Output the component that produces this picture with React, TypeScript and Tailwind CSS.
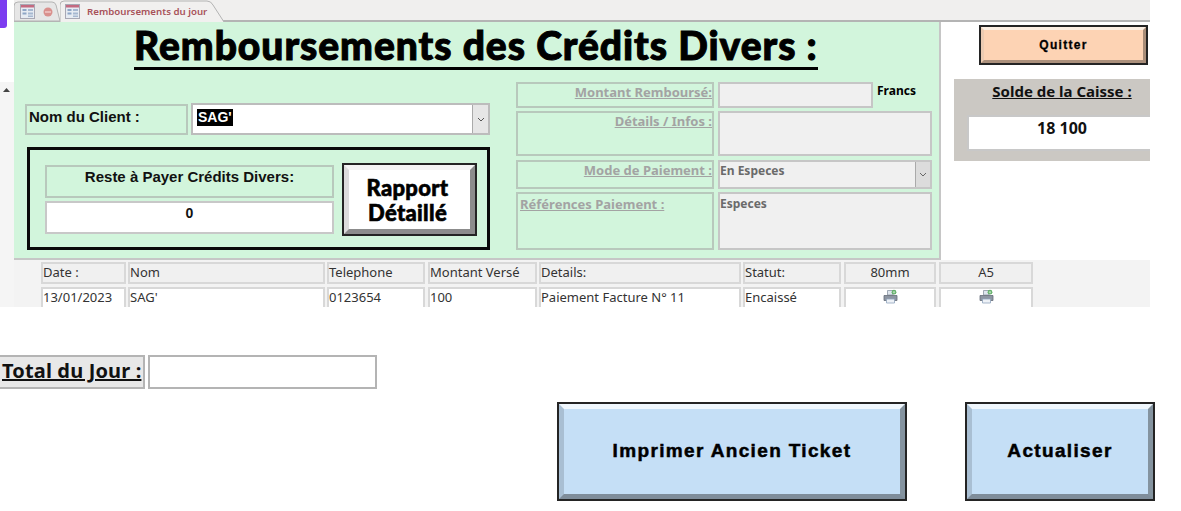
import React from 'react';

const arial = "font-['Liberation_Sans',Arial,sans-serif]";
const tahoma = "font-['Noto_Sans',sans-serif]";
const heavy = "font-['Lato',sans-serif]";

const FormIcon = () => (
    <svg width="15" height="15" viewBox="0 0 15 15">
        <rect x="0.5" y="0.5" width="14" height="14" fill="#e6ebf2" stroke="#a8a8b4" />
        <rect x="1" y="1" width="13" height="2.5" fill="#c46a80" />
        <rect x="2.5" y="5" width="4" height="2" fill="#8ea6c6" />
        <rect x="8" y="5" width="5" height="2" fill="#a6b8d0" />
        <rect x="2.5" y="8.5" width="4" height="2" fill="#8ea6c6" />
        <rect x="8" y="8.5" width="5" height="2" fill="#a6b8d0" />
        <rect x="8" y="11.5" width="5" height="1.5" fill="#a6b8d0" />
    </svg>
);

const PrinterIcon = () => (
    <svg width="15" height="15" viewBox="0 0 15 15">
        <path d="M4.5 1.5h5.5v4.5H4.5z" fill="#dfe6ee" stroke="#8b95a3" strokeWidth="0.8" />
        <path d="M1 6.5h13v5H1z" fill="#8d95a2" stroke="#666d78" strokeWidth="0.8" />
        <path d="M3.5 10h8v4h-8z" fill="#eef2f7" stroke="#8fa3bc" strokeWidth="0.8" />
        <circle cx="11" cy="3.2" r="2.4" fill="#63b06a" />
        <path d="M9.8 3.2h2.4M11 2v2.4" stroke="#e5f5e5" strokeWidth="0.6" />
    </svg>
);

const Tabs = () => (
    <div className="flex h-[22px] bg-[#f0efee] border-b-2 border-[#b4b4b4]">
        <div className="relative w-[46px] h-[22px]">
            <svg className="absolute inset-0" width="46" height="22" viewBox="0 0 46 22">
                <path d="M0 21V6Q0 2 4 2H38Q41 2 42 5L46 21Z" fill="#e6e6e6" stroke="#b4b4b4" />
            </svg>
            <div className="relative flex items-center gap-[8px] pl-[6px] pt-[4px]">
                <FormIcon />
                <svg width="10" height="10" viewBox="0 0 10 10">
                    <circle cx="5" cy="5" r="4.5" fill="#d9908d" />
                    <path d="M2 5h6" stroke="#f6d8d6" strokeWidth="1.2" />
                </svg>
            </div>
        </div>
        <div className="relative w-[165px] h-[22px]">
            <svg className="absolute inset-0" width="165" height="23" viewBox="0 0 165 23">
                <path d="M0 22V5Q0 1 4 1H147Q151 1 153 5L164 22" fill="#f1f0ef" stroke="#b4b4b4" />
            </svg>
            <div className={`relative flex items-center gap-[7px] pl-[5px] pt-[4px] text-[9.7px] font-semibold text-[#a8525a] ${tahoma}`}>
                <FormIcon />
                <span className="leading-[15px]">Remboursements du jour</span>
            </div>
        </div>
    </div>
);

const Bevel = ({ className, children }: { className: string; children: React.ReactNode }) => (
    <div className={`border-[2px] border-[#242424] ${className}`}>
        {children}
    </div>
);

const BlueButton = ({ label, width }: { label: string; width: string }) => (
    <Bevel className={`h-[99px] ${width}`}>
        <div className="h-full border-[5px] border-t-[#f0f7fd] border-l-[#a9bfd3] border-r-[#84939f] border-b-[#7f8d9a] bg-[#c5dff6] flex items-center justify-center">
            <span className={`text-[19px] font-bold tracking-[1.35px] [-webkit-text-stroke:0.5px_black] text-black ${arial}`}>{label}</span>
        </div>
    </Bevel>
);

const Cell = ({ className, children }: { className: string; children?: React.ReactNode }) => (
    <div className={`border-2 border-[#d8d8d8] ${className}`}>{children}</div>
);

const columns = [
    { w: 'w-[85px] mr-[2px]', head: 'Date :', row: '13/01/2023' },
    { w: 'w-[197px] mr-[2px]', head: 'Nom', row: "SAG'" },
    { w: 'w-[98px] mr-[3px]', head: 'Telephone', row: '0123654' },
    { w: 'w-[109px] mr-[2px]', head: 'Montant Versé', row: '100' },
    { w: 'w-[202px] mr-[2px]', head: 'Details:', row: 'Paiement Facture N° 11' },
    { w: 'w-[98px] mr-[3px]', head: 'Statut:', row: 'Encaissé' },
];

const grayField = 'border-2 border-[#c6c6c6] bg-[#f0f0f0]';
const greenField = 'border-2 border-[#b8c8bc]';
const grayLabel = `text-[13px] font-bold text-[#a3a3a3] underline ${tahoma}`;

const RightFields = () => (
    <div className="w-[416px] ml-[26px] flex flex-col">
        <div className="flex gap-[4px] h-[26px]">
            <div className={`w-[198px] text-right leading-[16px] whitespace-nowrap ${greenField} ${grayLabel}`}>Montant Remboursé:</div>
            <div className={`w-[155px] ${grayField}`} />
            <span className={`text-[12px] font-bold text-black leading-[18px] ${tahoma}`}>Francs</span>
        </div>
        <div className="flex gap-[4px] h-[45px] mt-[3px]">
            <div className={`w-[198px] text-right leading-[17px] ${greenField} ${grayLabel}`}>Détails / Infos :</div>
            <div className={`w-[214px] ${grayField}`} />
        </div>
        <div className="flex gap-[4px] h-[29px] mt-[4px]">
            <div className={`w-[198px] text-right leading-[17px] ${greenField} ${grayLabel}`}>Mode de Paiement :</div>
            <div className={`w-[214px] flex justify-between ${grayField}`}>
                <span className={`text-[12px] font-bold text-[#6a6a6a] leading-[17px] ${tahoma}`}>En Especes</span>
                <div className="w-[15px] bg-[#dcdcdc] border-l border-[#aaaaaa] flex items-center justify-center">
                    <svg width="8" height="5" viewBox="0 0 8 5"><path d="M1 1l3 3 3-3" fill="none" stroke="#666" /></svg>
                </div>
            </div>
        </div>
        <div className="flex gap-[4px] h-[58px] mt-[3px]">
            <div className={`w-[198px] pl-[2px] leading-[20px] whitespace-nowrap ${greenField} ${grayLabel}`}>Références Paiement :</div>
            <div className={`w-[214px] text-[12px] font-bold text-[#6a6a6a] leading-[20px] ${grayField} ${tahoma}`}>Especes</div>
        </div>
    </div>
);

const LeftFields = () => (
    <div className="w-[465px] ml-[11px] pt-[21px]">
        <div className="flex h-[32px] gap-[3px]">
            <div className={`w-[163px] mt-[1px] pl-[2px] text-[15px] font-bold text-[#111] leading-[22px] ${greenField} ${arial}`}>Nom du Client :</div>
            <div className="flex-1 flex justify-between bg-white border-2 border-[#bcbcbc]">
                <span className={`ml-[4px] mt-[4px] h-[17px] px-[1px] bg-black text-white text-[14px] font-bold leading-[17px] ${arial}`}>SAG'</span>
                <div className="w-[16px] bg-[#e6e6e6] border-l border-[#aaaaaa] flex items-center justify-center">
                    <svg width="8" height="5" viewBox="0 0 8 5"><path d="M1 1l3 3 3-3" fill="none" stroke="#555" /></svg>
                </div>
            </div>
        </div>
        <div className="ml-[2px] mt-[12px] h-[103px] border-[3px] border-[#0a0a0a] flex pl-[15px] pt-[13px] gap-[8px]">
            <div className="w-[289px] mt-[2px] flex flex-col gap-[3px]">
                <div className={`h-[33px] text-center text-[15px] font-bold text-[#111] leading-[20px] ${greenField} ${arial}`}>Reste à Payer Crédits Divers:</div>
                <div className={`h-[33px] bg-white text-center text-[14px] font-bold text-[#111] leading-[20px] border-2 border-[#c8c8c8] ${arial}`}>0</div>
            </div>
            <Bevel className="w-[135px] h-[73px]">
                <div className={`h-full border-[5px] border-t-[#f4f4f4] border-l-[#dcdcdc] border-r-[#8c8c8c] border-b-[#8c8c8c] bg-white flex items-center justify-center text-center pr-[4px] text-[22px] leading-[25px] font-black tracking-[0.3px] [-webkit-text-stroke:0.6px_black] text-black ${heavy}`}>
                    Rapport<br />Détaillé
                </div>
            </Bevel>
        </div>
    </div>
);

const GridTable = () => (
    <div className={`h-[47px] bg-[#f3f3f3] pl-[27px] pt-[2px] text-[13px] text-[#333] ${tahoma}`}>
        <div className="flex h-[22px]">
            {columns.map((c) => (
                <Cell key={c.head} className={`${c.w} bg-[#f0f0f0] leading-[17px] whitespace-nowrap`}>{c.head}</Cell>
            ))}
            <Cell className="w-[92px] mr-[3px] bg-[#f0f0f0] text-center leading-[17px]">80mm</Cell>
            <Cell className="w-[94px] bg-[#f0f0f0] text-center leading-[17px]">A5</Cell>
        </div>
        <div className="flex h-[22px] mt-[3px]">
            {columns.map((c) => (
                <Cell key={c.head} className={`${c.w} bg-white leading-[17px] whitespace-nowrap`}>{c.row}</Cell>
            ))}
            <Cell className="w-[92px] mr-[3px] bg-white flex justify-center"><PrinterIcon /></Cell>
            <Cell className="w-[94px] bg-white flex justify-center"><PrinterIcon /></Cell>
        </div>
    </div>
);

const App = () => {
    return (
        <div className="w-[1181px] h-[511px] bg-white overflow-hidden">
            <div className="flex w-[1150px] h-[307px] overflow-hidden">
                <div className="w-[14px] shrink-0 flex flex-col">
                    <div className="w-[7px] h-[28px] bg-[#7c3cf0] rounded-br-[3px]" />
                    <div className="h-[54px]" />
                    <div className="flex-1 bg-[#f5f5f5] pt-[6px] pl-[3px]">
                        <svg width="7" height="4" viewBox="0 0 7 4"><path d="M3.5 0L7 4H0z" fill="#444" /></svg>
                    </div>
                </div>
                <div className="flex-1 min-w-0">
                    <Tabs />
                    <div className="flex h-[238px]">
                        <div className="w-[927px] shrink-0 bg-[#d2f5dc] border-r-2 border-b-2 border-[#c6c6c6]">
                            <div className="h-[60px] pl-[120px] pt-[2px]">
                                <h1 className={`inline-block text-[39px] leading-[43px] font-black tracking-[0.95px] [-webkit-text-stroke:1px_black] text-black border-b-[3px] border-black whitespace-nowrap ${heavy}`}>
                                    Remboursements des Crédits Divers :
                                </h1>
                            </div>
                            <div className="flex">
                                <LeftFields />
                                <RightFields />
                            </div>
                        </div>
                        <div className="flex-1 min-w-0">
                            <div className="ml-[38px] mt-[3px] w-[169px]">
                                <Bevel className="h-[40px]">
                                    <div className={`h-full border-[3px] border-t-[#fbeee2] border-l-[#eccbb2] border-r-[#a98d78] border-b-[#ab907c] bg-[#fdd3b4] flex items-center justify-center text-[12px] font-bold tracking-[1.3px] [-webkit-text-stroke:0.3px_black] text-black ${arial}`}>
                                        Quitter
                                    </div>
                                </Bevel>
                            </div>
                            <div className={`ml-[13px] mt-[14px] w-[216px] h-[82px] bg-[#cbc8c3] pt-[2px] ${tahoma}`}>
                                <div className="text-center text-[15px] font-bold text-[#111] underline leading-[20px]">Solde de la Caisse :</div>
                                <div className="ml-[13px] mt-[14px] w-[190px] h-[36px] bg-white border-2 border-[#c8c8c8] text-center text-[16px] font-bold text-[#111] leading-[22px]">18 100</div>
                            </div>
                        </div>
                    </div>
                    <GridTable />
                </div>
            </div>

            <div className={`flex gap-[3px] h-[34px] mt-[48px] ${tahoma}`}>
                <div className="w-[145px] bg-[#e8e8e8] border-2 border-l-0 border-[#b4b4b4] pl-[2px] text-[20px] font-bold tracking-[0.15px] text-[#111] underline leading-[28px] whitespace-nowrap">Total du Jour :</div>
                <div className="w-[229px] bg-white border-2 border-[#b4b4b4]" />
            </div>

            <div className="flex gap-[58px] ml-[557px] mt-[13px]">
                <BlueButton label="Imprimer Ancien Ticket" width="w-[350px]" />
                <BlueButton label="Actualiser" width="w-[190px]" />
            </div>
        </div>
    );
};

export default App;
